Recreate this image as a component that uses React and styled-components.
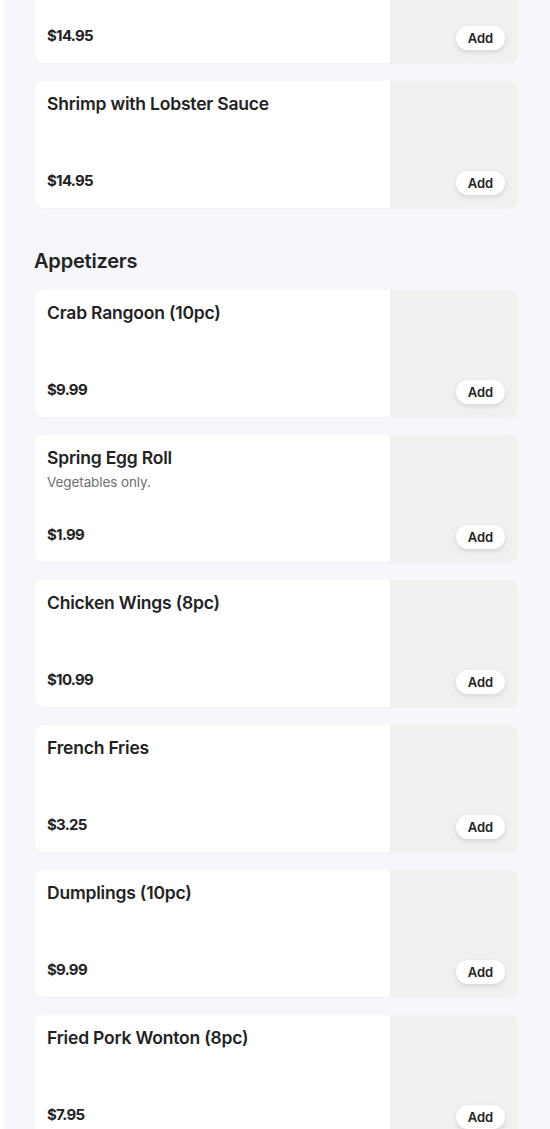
import React from 'react'
import styled, { createGlobalStyle } from 'styled-components'

const GlobalStyle = createGlobalStyle`
    html, body {
        margin: 0;
        padding: 0;
        background: #ffffff;
    }
    body {
        font-family: Inter, "Noto Sans", sans-serif;
        color: #222222;
    }
`

const Page = styled.div`
    padding-left: 4px;
    height: 1129px;
    overflow: hidden;
    background: #ffffff;
`

const Panel = styled.div`
    background: #f6f7fa;
    padding: 0 32px 40px 31px;
    min-height: 100%;
`

const Scroller = styled.div`
    margin-top: -64px;
`

const Section = styled.section`
    display: flex;
    flex-direction: column;
    gap: 18px;
`

const SectionTitle = styled.h2`
    margin: 0 0 0 -1px;
    padding: 41px 0 0;
    height: 82px;
    box-sizing: border-box;
    font-size: 20px;
    line-height: 24px;
    font-weight: 600;
    color: #222222;
    letter-spacing: -0.2px;
`

const Card = styled.div`
    display: flex;
    height: 127px;
    background: #ffffff;
    border-radius: 8px;
    overflow: hidden;
    box-shadow: 0 1px 2px rgba(20, 20, 40, 0.03);
`

const Info = styled.div`
    flex: 1;
    display: flex;
    flex-direction: column;
    justify-content: space-between;
    padding: 11px 12px 17px;
    min-width: 0;
`

const Name = styled.div`
    font-size: 17.5px;
    line-height: 24px;
    font-weight: 600;
    color: #222222;
    letter-spacing: -0.2px;
`

const Description = styled.div`
    margin-top: 2px;
    font-size: 13.5px;
    line-height: 20px;
    color: #707070;
    letter-spacing: -0.1px;
`

const Price = styled.div`
    font-size: 15px;
    line-height: 20px;
    font-weight: 700;
    color: #222222;
    letter-spacing: -0.7px;
`

const Thumb = styled.div`
    width: 128px;
    flex-shrink: 0;
    background: #f0f0f0;
    display: flex;
    align-items: flex-end;
    justify-content: flex-end;
    padding: 0 13px 13px 0;
    box-sizing: border-box;
`

const AddButton = styled.button`
    width: 49px;
    height: 24px;
    border: none;
    border-radius: 12px;
    background: #ffffff;
    box-shadow: 0 2px 5px rgba(0, 0, 0, 0.12);
    font-family: inherit;
    font-size: 13px;
    font-weight: 600;
    color: #222222;
    padding: 0;
`

// the first card is scrolled partly out of view, only its price shows
const previous = [
    { name: '', price: '$14.95' },
    { name: 'Shrimp with Lobster Sauce', price: '$14.95' },
]

const appetizers = [
    { name: 'Crab Rangoon (10pc)', price: '$9.99' },
    { name: 'Spring Egg Roll', desc: 'Vegetables only.', price: '$1.99' },
    { name: 'Chicken Wings (8pc)', price: '$10.99' },
    { name: 'French Fries', price: '$3.25' },
    { name: 'Dumplings (10pc)', price: '$9.99' },
    { name: 'Fried Pork Wonton (8pc)', price: '$7.95' },
]

const MenuItem = ({ item }) => (
    <Card>
        <Info>
            <div>
                <Name>{item.name}</Name>
                {item.desc && <Description>{item.desc}</Description>}
            </div>
            <Price>{item.price}</Price>
        </Info>
        <Thumb>
            <AddButton>Add</AddButton>
        </Thumb>
    </Card>
)

const App = () => {
    return (
        <Page>
            <GlobalStyle />
            <Panel>
                <Scroller>
                    <Section>
                        {previous.map((item, i) => <MenuItem key={i} item={item} />)}
                    </Section>
                    <SectionTitle>Appetizers</SectionTitle>
                    <Section>
                        {appetizers.map(item => <MenuItem key={item.name} item={item} />)}
                    </Section>
                </Scroller>
            </Panel>
        </Page>
    )
}

export default App
